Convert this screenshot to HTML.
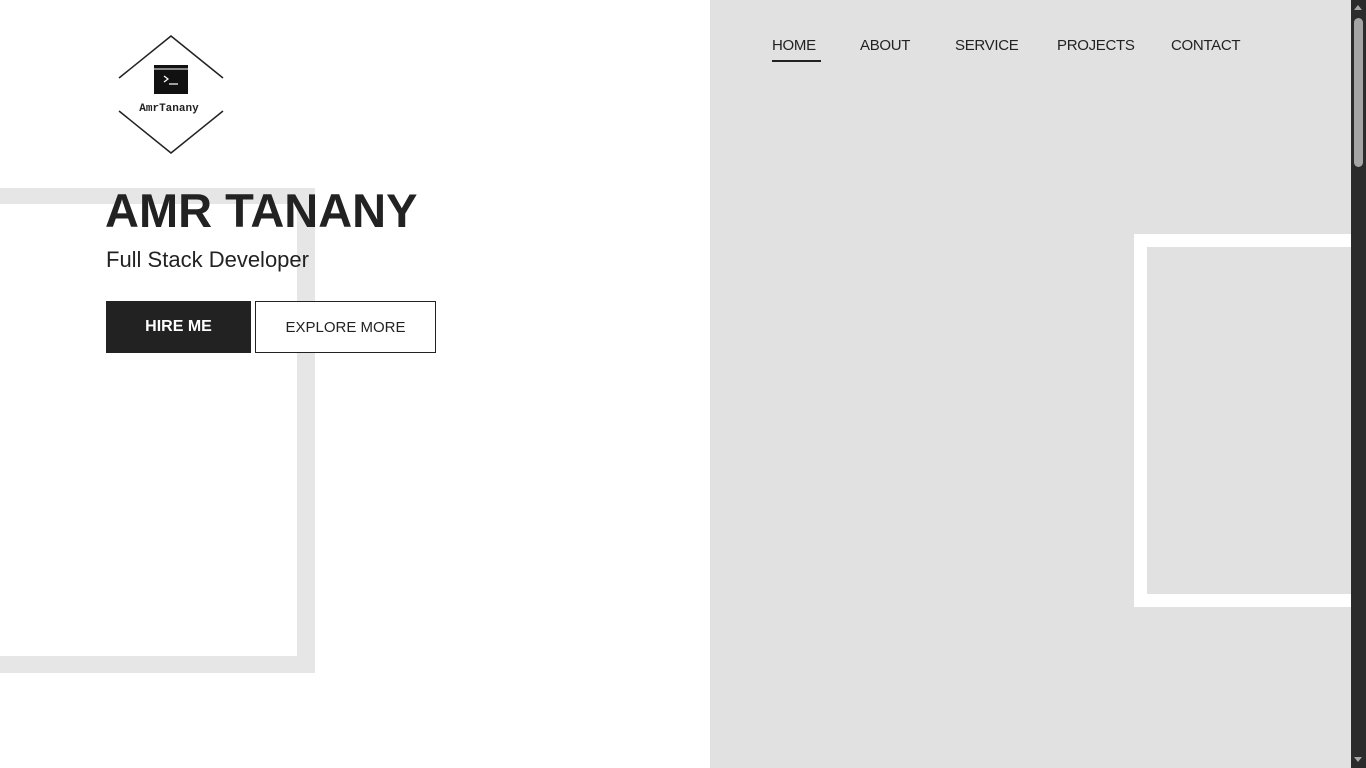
<!DOCTYPE html>
<html><head><meta charset="utf-8"><style>
*{margin:0;padding:0;box-sizing:border-box}
html,body{width:1366px;height:768px;overflow:hidden;background:#fff;font-family:"Liberation Sans","DejaVu Sans",sans-serif;color:#222}
.abs{position:absolute}
.nav{position:absolute;top:37px;font-size:15px;letter-spacing:-0.3px;white-space:nowrap}
</style></head><body>
<div class="abs" style="left:0;top:188px;width:315px;height:485px;background:#e6e6e6"></div>
<div class="abs" style="left:0;top:204px;width:297px;height:452px;background:#fff"></div>
<div class="abs" style="left:710px;top:0;width:641px;height:768px;background:#e1e1e1"></div>
<div class="abs" style="left:1134px;top:234px;width:217px;height:373px;background:#fff"></div>
<div class="abs" style="left:1147px;top:247px;width:204px;height:347px;background:#e1e1e1"></div>
<div class="abs" style="left:1351px;top:0;width:15px;height:768px;background:#2b2b2b"></div>
<div class="abs" style="left:1354px;top:18px;width:9px;height:149px;background:#a5a5a5;border-radius:5px"></div>
<div class="abs" style="left:1354px;top:5px;width:0;height:0;border-left:4px solid transparent;border-right:4px solid transparent;border-bottom:5px solid #a5a5a5"></div>
<div class="abs" style="left:1354px;top:757px;width:0;height:0;border-left:4px solid transparent;border-right:4px solid transparent;border-top:5px solid #a5a5a5"></div>

<svg class="abs" style="left:110px;top:30px" width="124" height="130" viewBox="110 30 124 130">
<polyline points="119,78 171,36 223,78" fill="none" stroke="#222" stroke-width="1.5"/>
<polyline points="119,111 171,153 223,111" fill="none" stroke="#222" stroke-width="1.5"/>
<rect x="154" y="65" width="34" height="29" fill="#111"/>
<line x1="154" y1="69" x2="188" y2="69" stroke="#fff" stroke-width="1"/>
<polyline points="164,76 168,79 164,82" fill="none" stroke="#fff" stroke-width="1.2"/>
<line x1="169" y1="84" x2="178" y2="84" stroke="#fff" stroke-width="1.2"/>
<text x="169" y="111" text-anchor="middle" font-family="Liberation Mono,monospace" font-size="11" font-weight="bold" fill="#222">AmrTanany</text>
</svg>

<div class="abs" style="left:105px;top:183px;font-size:47px;font-weight:bold;white-space:nowrap">AMR TANANY</div>
<div class="abs" style="left:106px;top:247px;font-size:22px;white-space:nowrap">Full Stack Developer</div>
<div class="abs" style="left:106px;top:301px;width:145px;height:52px;background:#222;color:#fff;font-size:16px;font-weight:bold;display:flex;align-items:center;justify-content:center">HIRE ME</div>
<div class="abs" style="left:255px;top:301px;width:181px;height:52px;border:1px solid #222;background:#fff;font-size:15px;display:flex;align-items:center;justify-content:center">EXPLORE MORE</div>

<div class="nav" style="left:772px">HOME</div>
<div class="abs" style="left:772px;top:60px;width:49px;height:2px;background:#222"></div>
<div class="nav" style="left:860px">ABOUT</div>
<div class="nav" style="left:955px">SERVICE</div>
<div class="nav" style="left:1057px">PROJECTS</div>
<div class="nav" style="left:1171px">CONTACT</div>
</body></html>
